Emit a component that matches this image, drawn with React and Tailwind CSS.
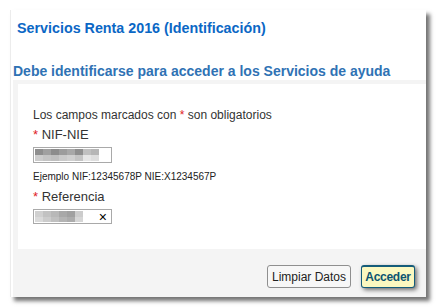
import React from 'react';

// Blurred placeholder value shown inside the inputs
function Blur({ cells }) {
  return (
    <div className="flex flex-col h-full">
      <div className="flex h-1/2">
        {cells.map((c, i) => <span key={i} className="w-[8px] h-full" style={{ background: c[0] }} />)}
      </div>
      <div className="flex h-1/2">
        {cells.map((c, i) => <span key={i} className="w-[8px] h-full" style={{ background: c[1] }} />)}
      </div>
    </div>
  );
}

const nif = [
  ['#8e8e8e', '#cccccc'], ['#a0a0a0', '#c4c4c4'], ['#8c8c8c', '#bfbfbf'], ['#9c9c9c', '#cacaca'],
  ['#a8a8a8', '#d0d0d0'], ['#8f8f8f', '#c4c4c4'], ['#c0c0c0', '#e6e6e6'], ['#b6b6b6', '#dedede'],
];
const ref = [
  ['#d0d0d0', '#dadada'], ['#c2c2c2', '#cccccc'], ['#b8b8b8', '#c0c0c0'], ['#a8a8a8', '#b4b4b4'],
  ['#a0a0a0', '#acacac'], ['#cccccc', '#d6d6d6'],
];

export default function App() {
  return (
    <div className="w-[437px] h-[308px] bg-white pt-[10px] pl-[10px]" style={{ fontFamily: '"Liberation Sans", Arial, sans-serif' }}>
      <div className="w-[416px] h-[287px] bg-white border-l border-[#ececec] flex flex-col shadow-[4px_4px_4px_rgba(0,0,0,0.55)]">
        <h1 className="text-[14.3px] font-bold text-[#0b67c5] pl-[6px] pt-[10px] leading-[17px]">Servicios Renta 2016 (Identificación)</h1>
        <h2 className="text-[14px] font-bold text-[#2f72b4] pl-[2px] mt-[26px] leading-[17px]">Debe identificarse para acceder a los Servicios de ayuda</h2>
        <div className="flex-1 mt-[0px] ml-[2px] bg-[#f4f4f4] pt-[4px] flex flex-col">
          <div className="ml-[5px] h-[165px] bg-white pl-[15px] pt-[24px] text-[#333]">
            <p className="text-[12px] leading-[14px]">Los campos marcados con <span className="text-[#e0201f]">*</span> son obligatorios</p>
            <p className="text-[13px] leading-[15px] mt-[5px]"><span className="text-[#e0201f]">*</span> NIF-NIE</p>
            <div className="mt-[5px] w-[79px] h-[16px] border border-[#a9a9a9] bg-white p-px">
              <div className="h-full"><Blur cells={nif} /></div>
            </div>
            <p className="text-[10px] leading-[12px] mt-[8px] text-[#222]">Ejemplo NIF:12345678P NIE:X1234567P</p>
            <p className="text-[13px] leading-[15px] mt-[6px]"><span className="text-[#e0201f]">*</span> Referencia</p>
            <div className="mt-[5px] w-[79px] h-[15px] border border-[#a9a9a9] bg-white p-px flex items-center">
              <div className="h-full"><Blur cells={ref} /></div>
              <span className="ml-auto mr-[3px] text-[14px] leading-none text-black">×</span>
            </div>
          </div>
          <div className="flex justify-end items-center gap-[10px] pr-[11px] pt-[16px]">
            <button className="h-[23px] px-[4px] border border-[#8f8f8f] rounded-[3px] bg-[#f7f7f7] text-[12px] text-[#222] leading-none">Limpiar Datos</button>
            <button className="h-[23px] w-[54px] border border-[#155c7a] border-t-2 rounded-[3px] bg-[#fbf8c0] text-[12px] font-bold text-[#0d5370] leading-none tracking-[-0.3px] shadow-[2px_2px_4px_rgba(0,0,0,0.55)]">Acceder</button>
          </div>
        </div>
      </div>
    </div>
  );
}
